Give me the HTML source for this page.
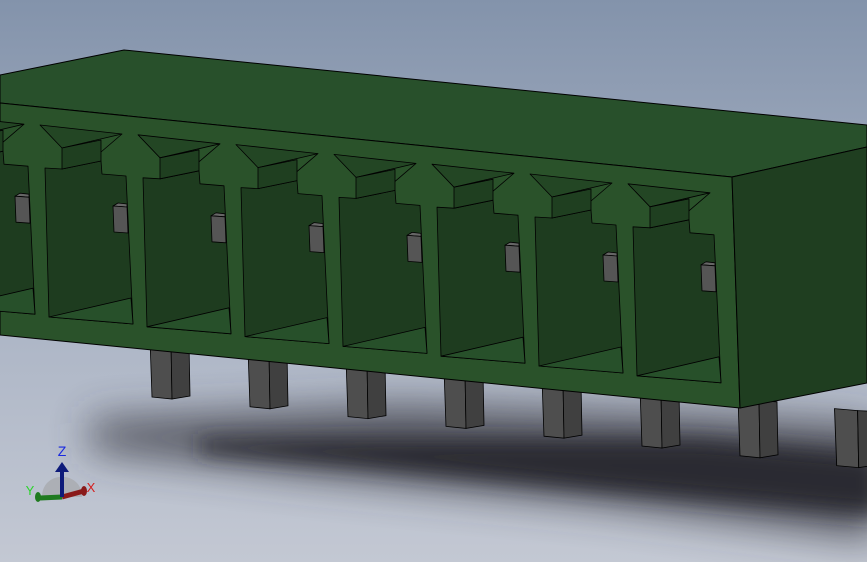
<!DOCTYPE html>
<html><head><meta charset="utf-8"><style>
html,body{margin:0;padding:0;width:867px;height:562px;overflow:hidden}
svg{display:block}
</style></head><body>
<svg width="867" height="562" viewBox="0 0 867 562" xmlns="http://www.w3.org/2000/svg">
<defs>
<linearGradient id="bg" x1="0" y1="0" x2="0" y2="1">
<stop offset="0" stop-color="#8393ab"/>
<stop offset="0.45" stop-color="#a6b0c2"/>
<stop offset="1" stop-color="#c3c8d3"/>
</linearGradient>
<filter id="blur" x="-20%" y="-80%" width="140%" height="260%"><feGaussianBlur stdDeviation="20"/></filter>
<filter id="blur2" x="-20%" y="-80%" width="140%" height="260%"><feGaussianBlur stdDeviation="10"/></filter>
<g id="slot" stroke="#000" stroke-width="0.8" stroke-linejoin="round">
<polygon points="45,168 62,169 101,161 102,174 126,176 133,324 49,317" fill="#1e3c1f"/>
<polygon points="49,317 131,298 133,324" fill="#27502a"/>
<polygon points="40,125 122,134 62,148" fill="#234624"/>
<polygon points="62,148 62,169 101,161 101,140" fill="#1f3f20"/>
<line x1="122" y1="134" x2="101" y2="152"/>
<polygon points="113,206 118,203 127,204 127,207" fill="#666"/>
<polygon points="113,206 127,207 128,233 114,232" fill="#555"/>
</g>
<g id="pin" stroke="#000" stroke-width="0.8">
<polygon points="150,340 171,342 172,399 152,397" fill="#4e4e4e"/>
<polygon points="171,342 189,343 190,396 172,399" fill="#404040"/>
</g>
</defs>
<rect width="867" height="562" fill="url(#bg)"/>
<polygon points="90,420 400,405 700,415 880,425 880,540 600,505 300,475 90,450" fill="#34363c" opacity="0.75" filter="url(#blur)"/>
<polygon points="200,440 450,440 700,440 880,455 880,515 600,490 350,465 200,452" fill="#2b2c31" filter="url(#blur2)"/>
<use href="#pin" transform="translate(0,0)"/>
<use href="#pin" transform="translate(98,9.8)"/>
<use href="#pin" transform="translate(196,19.6)"/>
<use href="#pin" transform="translate(294,29.4)"/>
<use href="#pin" transform="translate(392,39.2)"/>
<use href="#pin" transform="translate(490,49)"/>
<use href="#pin" transform="translate(588,58.8)"/>
<use href="#pin" transform="translate(686,68.6) scale(1.1,1) translate(-15,0)"/>
<g stroke="#000" stroke-width="1" stroke-linejoin="round">
<polygon points="0,75 124,50 867,125 867,147 732,177 0,103" fill="#28502b"/>
<polygon points="0,103 732,177 740,408 0,335" fill="#2a522a"/>
<polygon points="732,177 867,147 867,383 740,408" fill="#1f3e20"/>
</g>
<use href="#slot" transform="translate(-98,-9.8)"/>
<use href="#slot"/>
<use href="#slot" transform="translate(98,9.8)"/>
<use href="#slot" transform="translate(196,19.6)"/>
<use href="#slot" transform="translate(294,29.4)"/>
<use href="#slot" transform="translate(392,39.2)"/>
<use href="#slot" transform="translate(490,49)"/>
<use href="#slot" transform="translate(588,58.8)"/>
<!-- triad -->
<path d="M42,497 C42,470 82,470 82,497 Z" fill="#a9abb0" opacity="0.85"/>
<line x1="62" y1="497" x2="40" y2="498" stroke="#1f7a1f" stroke-width="5"/>
<ellipse cx="38" cy="497" rx="3" ry="5" fill="#1f7a1f"/>
<line x1="62" y1="497" x2="84" y2="491" stroke="#8a1a1a" stroke-width="5"/>
<ellipse cx="84" cy="491" rx="3" ry="5" fill="#8a1a1a"/>
<line x1="62" y1="497" x2="62" y2="470" stroke="#0e1b7a" stroke-width="4"/>
<polygon points="55,472 62,462 69,472" fill="#0e1b7a"/>
<text x="62" y="456" font-family="Liberation Sans, sans-serif" font-size="14" fill="#1a2ae0" text-anchor="middle">Z</text>
<text x="30" y="495" font-family="Liberation Sans, sans-serif" font-size="13" fill="#2bd42b" text-anchor="middle">Y</text>
<text x="91" y="492" font-family="Liberation Sans, sans-serif" font-size="13" fill="#d42020" text-anchor="middle">X</text>
</svg>
</body></html>
